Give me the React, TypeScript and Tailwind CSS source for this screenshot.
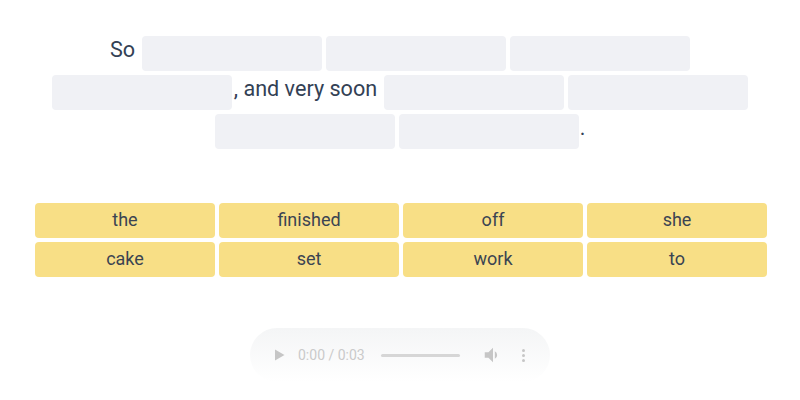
import React from "react";

const Blank = () => <div className="h-[35px] w-[180px] rounded-[4px] bg-[#f0f1f5]" />;

export default function App() {
  const words = ["the", "finished", "off", "she", "cake", "set", "work", "to"];
  return (
    <div
      className="w-[800px] h-[400px] bg-white flex flex-col items-center text-[#334155]"
      style={{ fontFamily: "Roboto, 'Liberation Sans', sans-serif" }}
    >
      <div className="mt-[36px] w-[732px] flex flex-wrap justify-center gap-1">
        <span className="text-[21.6px] leading-[28px] mr-[3px] self-start">So</span>
        <Blank />
        <Blank />
        <Blank />
        <Blank />
        <span className="text-[21.6px] leading-[28px] -ml-0.5 mr-[3px] self-start">, and very soon</span>
        <Blank />
        <Blank />
        <Blank />
        <Blank />
        <span className="text-[21.6px] leading-[28px] -ml-[3px] self-start">.</span>
      </div>
      <div className="mt-[54px] ml-[2px] w-[732px] grid grid-cols-4 gap-1">
        {words.map((w) => (
          <div
            key={w}
            className="h-[35px] rounded-[4px] bg-[#f8df86] flex items-center justify-center pb-[2px] text-lg text-[#3b4452]"
          >
            {w}
          </div>
        ))}
      </div>
      <div className="mt-[51px] w-[300px] h-[54px] rounded-full bg-gradient-to-b from-[#f4f5f6] to-white flex items-center pl-[24px] pr-[20px]">
        <svg width="11" height="12" viewBox="0 0 11 12" className="shrink-0">
          <path d="M1 0.5 L10.5 6 L1 11.5 Z" fill="#c6c6c6" />
        </svg>
        <span className="ml-[13px] text-[14px] text-[#cacaca] whitespace-nowrap">0:00 / 0:03</span>
        <div className="ml-[16px] w-[79px] h-[3px] rounded-full bg-[#d6d6d6]" />
        <svg width="22" height="22" viewBox="0 0 24 24" className="ml-[22px] shrink-0">
          <path
            d="M3 9v6h4l5 5V4L7 9H3zm13.5 3A4.5 4.5 0 0 0 14 7.97v8.05c1.48-.73 2.5-2.25 2.5-4.02z"
            fill="#c6c6c6"
          />
        </svg>
        <div className="ml-[18px] flex flex-col gap-[2px]">
          <div className="w-[3px] h-[3px] rounded-full bg-[#c6c6c6]" />
          <div className="w-[3px] h-[3px] rounded-full bg-[#c6c6c6]" />
          <div className="w-[3px] h-[3px] rounded-full bg-[#c6c6c6]" />
        </div>
      </div>
    </div>
  );
}
